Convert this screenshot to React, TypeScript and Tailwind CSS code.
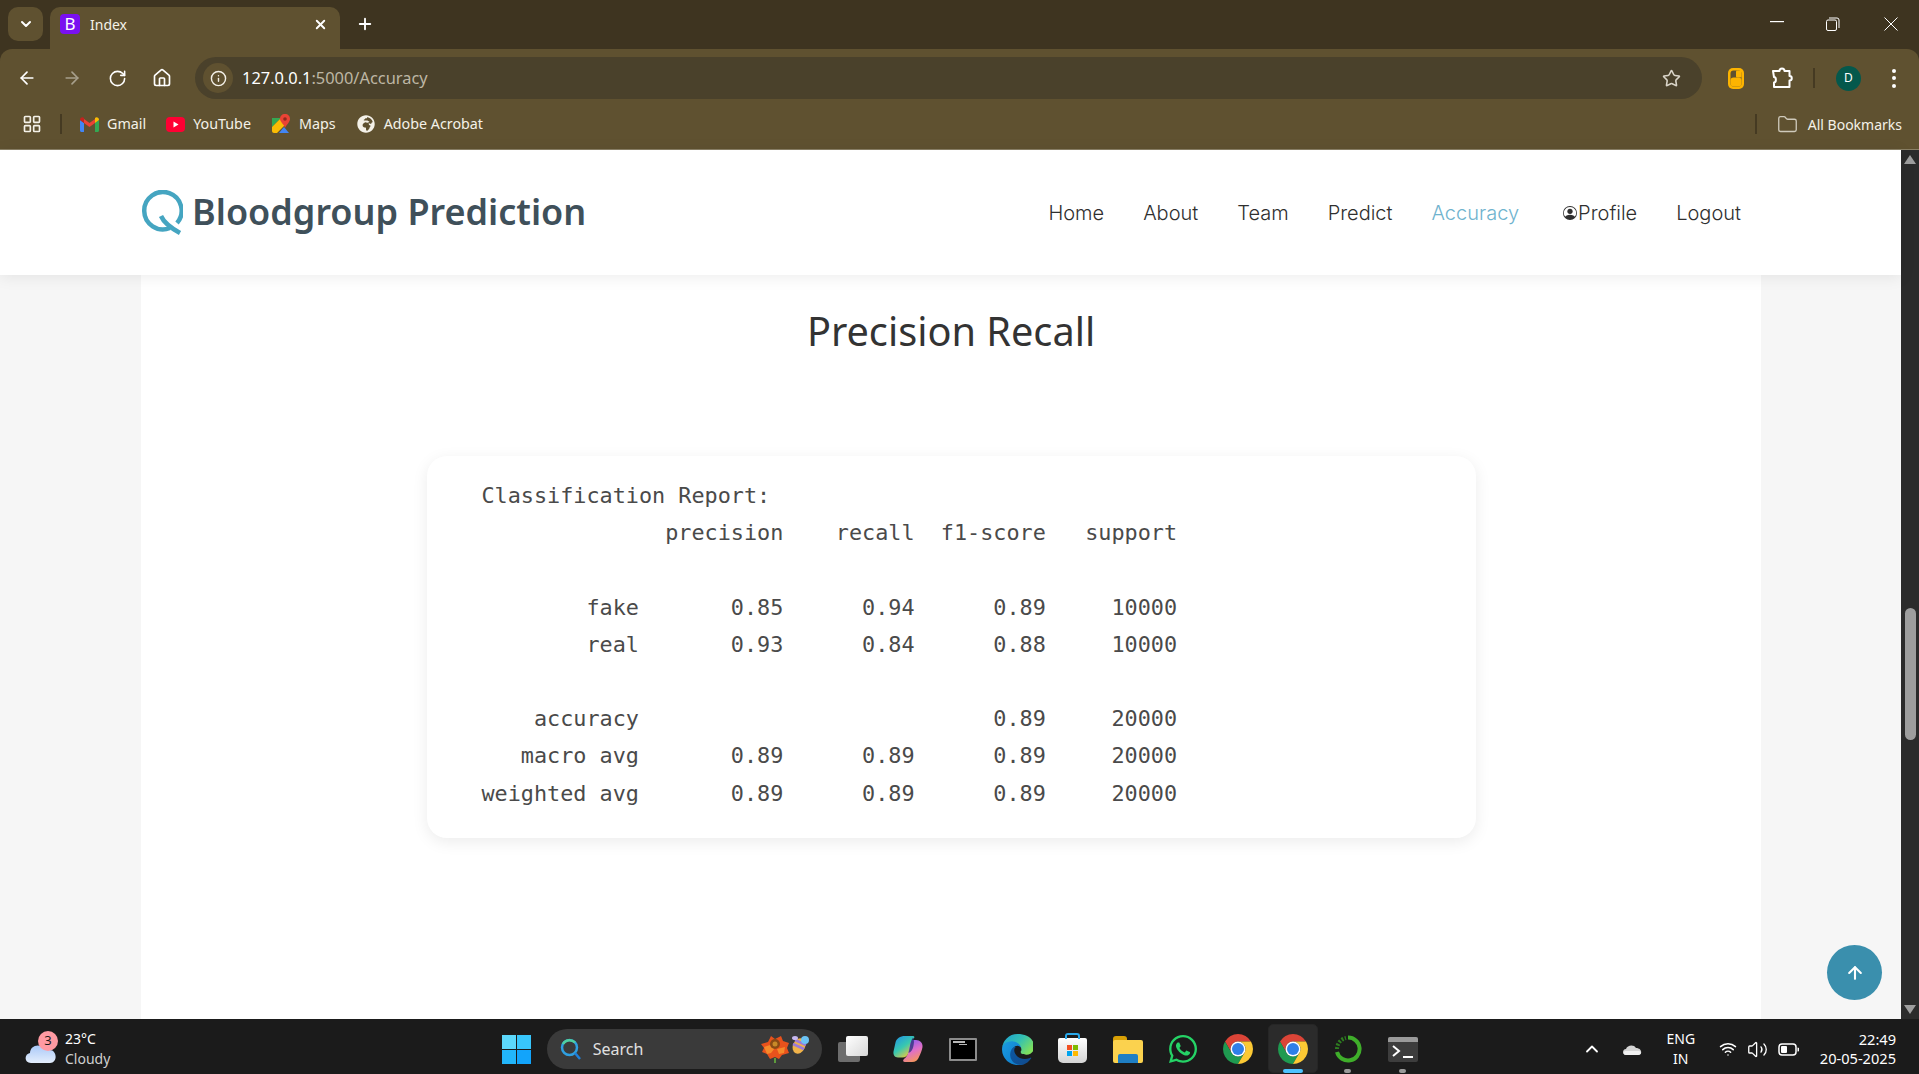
import { ArrowUp, ChevronDown, ChevronUp, Plus, X, ArrowLeft, ArrowRight, RotateCw, Home, Info, Star, Folder, LayoutGrid, Volume2, Wifi } from "lucide-react";
import { BsPersonCircle } from "react-icons/bs";
import { FaWhatsapp, FaGlobeAfrica } from "react-icons/fa";

const report = `Classification Report:
              precision    recall  f1-score   support

        fake       0.85      0.94      0.89     10000
        real       0.93      0.84      0.88     10000

    accuracy                           0.89     20000
   macro avg       0.89      0.89      0.89     20000
weighted avg       0.89      0.89      0.89     20000`;

function ChromeLogo() {
  return (
    <svg width="30" height="30" viewBox="4 4 40 40">
      <path fill="#db4437" d="M6.68 14A20 20 0 0 1 41.32 14H24A10 10 0 0 0 15.34 29Z" />
      <path fill="#1f9a50" d="M6.68 14L15.34 29A10 10 0 0 0 32.66 29L24 44A20 20 0 0 1 6.68 14Z" />
      <path fill="#fcc934" d="M41.32 14H24A10 10 0 0 1 32.66 29L24 44A20 20 0 0 0 41.32 14Z" />
      <circle cx="24" cy="24" r="10" fill="#fff" />
      <circle cx="24" cy="24" r="8" fill="#2f7fe8" />
    </svg>
  );
}

function EdgeLogo() {
  return (
    <svg width="31" height="31" viewBox="0 0 256 256">
      <defs>
        <linearGradient id="edgeBlue" x1="0" y1="0" x2="1" y2="1">
          <stop offset="0" stopColor="#0c59a4" />
          <stop offset="1" stopColor="#114a8b" />
        </linearGradient>
        <linearGradient id="edgeBody" x1="0" y1="0" x2="1" y2="1">
          <stop offset="0" stopColor="#1b9de2" />
          <stop offset="1" stopColor="#0d78c8" />
        </linearGradient>
        <linearGradient id="edgeTop" x1="0" y1="0" x2="1" y2="0.6">
          <stop offset="0" stopColor="#1aa0d8" />
          <stop offset="0.55" stopColor="#35c1b1" />
          <stop offset="1" stopColor="#7fe05c" />
        </linearGradient>
      </defs>
      <path fill="url(#edgeBlue)" d="M235.7 195.500a93.700 93.700 0 0 1-10.600 4.700 101.900 101.900 0 0 1-35.900 6.400c-47.300 0-88.500-32.500-88.500-74.300a31.500 31.500 0 0 1 16.400-27.300c-42.800 1.800-53.800 46.400-53.800 72.500 0 73.900 68.100 81.400 82.800 81.400 7.900 0 19.800-2.300 27-4.600l1.300-.4a128.300 128.300 0 0 0 66.600-52.800 4 4 0 0 0-5.300-5.700Z" />
      <path fill="url(#edgeBody)" d="M105.700 241.400a79.200 79.200 0 0 1-22.700-21.300 80.700 80.700 0 0 1 29.500-120c3.200-1.500 8.500-4.100 15.600-4a32.400 32.400 0 0 1 25.700 13 31.900 31.900 0 0 1 6.300 18.700c0-.2 24.500-79.600-80-79.600-43.900 0-80 41.700-80 78.200a130.200 130.200 0 0 0 12.100 56 128 128 0 0 0 156.400 67 75.500 75.500 0 0 1-63-8Z" />
      <path fill="url(#edgeTop)" d="M157.900 148.500c-.8 1-3.400 2.500-3.400 5.800 0 2.700 1.800 5.300 5 7.500 15 10.400 43.300 9 43.400 9a62.300 62.300 0 0 0 31.700-8.700 64.200 64.200 0 0 0 31.800-55.300c.3-23.400-8.300-39-11.800-45.900C232.700 17.200 184.800 0 128 0A128 128 0 0 0 0 126.200c.5-36.500 36.800-66 80-66 3.500 0 23.500.3 42 10.100a72.800 72.800 0 0 1 31 29.300c6.100 10.600 7.200 24.100 7.200 29.500s-2.700 13.300-7.800 19.900Z" />
    </svg>
  );
}

function CopilotLogo() {
  return (
    <svg width="30" height="28" viewBox="0 0 30 28">
      <defs>
        <linearGradient id="copA" x1="0" y1="0" x2="0.7" y2="1">
          <stop offset="0" stopColor="#1f8fe8" />
          <stop offset="0.55" stopColor="#38c8b0" />
          <stop offset="1" stopColor="#f5c838" />
        </linearGradient>
        <linearGradient id="copB" x1="0.3" y1="0" x2="0.7" y2="1">
          <stop offset="0" stopColor="#8a5cf0" />
          <stop offset="0.5" stopColor="#e070c8" />
          <stop offset="1" stopColor="#f89a50" />
        </linearGradient>
      </defs>
      <path fill="url(#copB)" d="M17 5h6c4 0 7 3 6.500 7-.5 3-2 7-3.500 10-1 3-3.500 5-7 5h-7c-2 0-2.500-1.500-1-3 3-2 4-5 4.500-9 .5-4 .5-10 2-10Z" />
      <path fill="url(#copA)" d="M12 1h8c1.500 0 2 1.500 .5 2.500-2 1.500-3 4-3.500 7l-1.500 7c-.7 3-3 5-6 5H5c-3.500 0-5-3-4.500-6l2-9C3.500 3.500 7 1 12 1Z" />
      <path fill="#27307a" d="M20 2.500c1.500 3 1 6 .3 9-.8 3-1.800 5.500-4.800 6.500l1.500-7c.5-3 1.300-6.500 3-8.500Z" opacity="0.75" />
    </svg>
  );
}

function Flower() {
  return (
    <svg width="30" height="28" viewBox="0 0 30 28">
      <path fill="#e8521c" d="M1 9l7-2 3-6 4 3 6-3 2 5 6 2-2 5 2 5-7 2-3 4-4-2-5 2-3-5-5-2 2-4Z" />
      <path fill="#f58a2a" d="M4 12l6-2 5 3-4 5-4 1Zm13 2l8-2-1 6-5 1Z" />
      <circle cx="15" cy="9" r="5" fill="#8a4a14" />
      <circle cx="15" cy="9" r="2.500" fill="#c88a28" />
      <rect x="14" y="23" width="2" height="5" fill="#5d9a3c" />
    </svg>
  );
}

function Bee() {
  return (
    <svg width="20" height="20" viewBox="0 0 20 20">
      <ellipse cx="9" cy="11" rx="6" ry="8" transform="rotate(25 9 11)" fill="#f0b34a" />
      <path d="M3 9l11 5M5 5l11 5" stroke="#9b7bd8" strokeWidth="2.500" />
      <circle cx="15" cy="5" r="4" fill="#6cc4f5" />
      <ellipse cx="5" cy="3" rx="3" ry="2" fill="#c7b8f0" />
    </svg>
  );
}

function TaskIcon({ children, active, dot }: { children: React.ReactNode; active?: boolean; dot?: boolean }) {
  return (
    <div className="relative flex h-[55px] w-[55px] items-center justify-center pt-[5px]">
      {active && <div className="absolute inset-x-[2.500px] top-[5px] bottom-[1px] rounded-[5px] border border-[#262626] bg-[#2b2b2b]" />}
      <div className="relative flex items-center justify-center">{children}</div>
      {active && <div className="absolute bottom-[1px] h-[4px] w-[20px] rounded-full bg-[#4cc2ff]" />}
      {dot && <div className="absolute bottom-[1px] h-[4px] w-[7px] rounded-full bg-[#9a9a9a]" />}
    </div>
  );
}

function Bookmark({ icon, label, gap }: { icon: React.ReactNode; label: string; gap: string }) {
  return (
    <div className={`flex items-center gap-[8px] ${gap}`}>
      <span className="flex w-[19px] justify-center">{icon}</span>
      <span className="text-[14.300px] text-[#f4f1e8]">{label}</span>
    </div>
  );
}

export default function App() {
  return (
    <div className="flex h-screen w-full flex-col overflow-hidden bg-white font-['Noto_Sans',sans-serif]">
      {/* tab strip */}
      <div className="flex h-[49px] shrink-0 bg-[#3e3420]">
        <div className="ml-[8px] mt-[7px] flex h-[34px] w-[35px] items-center justify-center rounded-[10px] bg-[#5f5130]">
          <ChevronDown size={16} strokeWidth={3} className="text-white" />
        </div>
        <div className="ml-[7px] mt-[7px] flex h-[42px] w-[290px] items-center rounded-t-[10px] bg-[#5f5130] pb-[8px] pl-[10px] pr-[12px]">
          <div className="flex h-[20px] w-[20px] items-center justify-center rounded-[4px] bg-[#7a10f0] text-[17px] text-white">B</div>
          <span className="ml-[10px] flex-1 text-[14px] text-[#f4f1e8]">Index</span>
          <X size={15} strokeWidth={3} className="text-white" />
        </div>
        <Plus size={18} strokeWidth={2.500} className="ml-[16px] mt-[15px] text-white" />
        <div className="ml-auto flex items-start text-white">
          <svg width="14" height="2" className="mr-[42px] mt-[21px]"><rect width="14" height="1.200" fill="#fff" /></svg>
          <svg width="14" height="14" viewBox="0 0 14 14" fill="none" stroke="#fff" className="mr-[44px] mt-[17px]">
            <rect x="0.5" y="3" width="10" height="10.500" rx="1.500" />
            <path d="M3 1h8a2 2 0 0 1 2 2v8" />
          </svg>
          <svg width="14" height="14" viewBox="0 0 14 14" stroke="#fff" className="mr-[21px] mt-[17px]">
            <path d="M.5.5l13 13M13.500.5l-13 13" />
          </svg>
        </div>
      </div>

      {/* toolbar */}
      <div className="shrink-0 bg-[#3e3420]">
        <div className="flex h-[58px] items-center rounded-t-[12px] bg-[#5f5130]">
          <div className="flex w-[195px] items-center pl-[17px] text-white">
            <ArrowLeft size={20} strokeWidth={2} />
            <ArrowRight size={20} strokeWidth={2} className="ml-[25px] text-[#a79f8b]" />
            <RotateCw size={19} strokeWidth={2} className="ml-[26px]" />
            <Home size={20} strokeWidth={2} className="ml-[25px]" />
          </div>
          <div className="flex h-[42px] w-[1507px] items-center rounded-full bg-[#4a412b] pl-[8px] pr-[21px]">
            <div className="flex h-[30px] w-[30px] items-center justify-center rounded-full bg-[#5f5130]">
              <Info size={17} className="text-[#f4f1e8]" />
            </div>
            <span className="ml-[9px] flex-1 text-[16.400px] text-white">
              127.0.0.1<span className="text-[#bdb6a4]">:5000/Accuracy</span>
            </span>
            <Star size={19} strokeWidth={2} className="text-[#d9d4c8]" />
          </div>
          <div className="flex flex-1 items-center pl-[26px]">
            <svg width="16" height="21" viewBox="0 0 16 21">
              <rect width="16" height="21" rx="5" fill="#fdb400" />
              <rect x="2.500" y="2.500" width="11" height="16" rx="3" fill="#5f5130" />
              <rect x="2.500" y="9.500" width="11" height="9" rx="3" fill="#fdb400" />
              <rect x="8" y="2.500" width="5.500" height="7" rx="1" fill="#fdb400" />
            </svg>
            <svg width="22" height="22" viewBox="0 0 22 22" fill="none" stroke="#fff" strokeWidth="2" strokeLinejoin="round" className="ml-[27px]">
              <path d="M2 4h6.500c0-3.500 5-3.500 5 0H18.500v5c3 0 3 4.500 0 4.500V20H3v-4.500c2.500 0 2.500-5.500 0-5.500Z" />
            </svg>
            <div className="ml-[20px] h-[20px] w-[2px] bg-[#453a22]" />
            <div className="ml-[21px] flex h-[25px] w-[25px] items-center justify-center rounded-full bg-[#04584c] text-[12px] text-white">D</div>
            <div className="ml-[31px] flex flex-col gap-[3.500px]">
              <span className="h-[4px] w-[4px] rounded-full bg-white" />
              <span className="h-[4px] w-[4px] rounded-full bg-white" />
              <span className="h-[4px] w-[4px] rounded-full bg-white" />
            </div>
          </div>
        </div>
      </div>

      {/* bookmarks */}
      <div className="flex h-[43px] shrink-0 items-center border-b border-[#8a8066] bg-[#5f5130] pb-[8px]">
        <LayoutGrid size={20} strokeWidth={2} className="ml-[22px] text-[#f4f1e8]" />
        <div className="ml-[18px] h-[20px] w-[2px] bg-[#453a22]" />
        <Bookmark
          gap="ml-[18px]"
          label="Gmail"
          icon={
            <svg width="19" height="15" viewBox="0 0 19 15">
              <path fill="#4285f4" d="M0 3v10.500C0 14.300.7 15 1.500 15H4V6Z" />
              <path fill="#34a853" d="M19 3v10.500c0 .8-.7 1.500-1.500 1.500H15V6Z" />
              <path fill="#ea4335" d="M4 6v-4L9.500 6 15 2v4L9.500 10Z" />
              <path fill="#c5221f" d="M0 3c0-2.500 2.500-3.500 4-2v5Z" />
              <path fill="#fbbc04" d="M19 3c0-2.500-2.500-3.500-4-2v5Z" />
            </svg>
          }
        />
        <Bookmark
          gap="ml-[20px]"
          label="YouTube"
          icon={
            <svg width="19" height="15" viewBox="0 0 19 15">
              <rect width="19" height="15" rx="4" fill="#ff0033" />
              <path d="M7.500 4.500l5 3-5 3Z" fill="#fff" />
            </svg>
          }
        />
        <Bookmark
          gap="ml-[21px]"
          label="Maps"
          icon={
            <svg width="18" height="20" viewBox="0 0 18 20">
              <path fill="#34a853" d="M0 4h9L0 13Z" />
              <path fill="#fbbc04" d="M0 13 9 4l5 6-9 9H2c-1 0-2-1-2-2Z" />
              <path fill="#4285f4" d="M7 19l5-6 5 6Z" />
              <path fill="#ea4335" d="M13 0c3 0 5 2 5 5 0 3-3 5-5 9-1-4-5-6-5-9 0-3 2-5 5-5Z" />
              <circle cx="13" cy="5" r="1.800" fill="#8e2a1f" />
            </svg>
          }
        />
        <Bookmark gap="ml-[21px]" label="Adobe Acrobat" icon={<FaGlobeAfrica size={18} className="text-[#f4f1e8]" />} />
        <div className="ml-auto h-[20px] w-[2px] bg-[#453a22]" />
        <Folder size={21} strokeWidth={1.500} className="ml-[20px] text-[#cfcabb]" />
        <span className="ml-[10px] mr-[17px] text-[14px] text-[#f4f1e8]">All Bookmarks</span>
      </div>

      {/* page */}
      <div className="flex min-h-0 flex-1">
        <div className="relative flex min-w-0 flex-1 flex-col bg-[#f6f6f6]">
          <header className="z-10 flex h-[125px] shrink-0 items-center bg-white pl-[141px] pr-[160px] shadow-[0_2px_15px_rgba(0,0,0,0.08)]">
            <svg width="42" height="45" viewBox="0 0 42 45" fill="none" stroke="#45a5c1" strokeWidth="4.500" className="mb-[1px]">
              <path d="M36 33A18.700 18.700 0 1 0 29 38" />
              <path d="M20 26c3 7 10 12 19 17" />
            </svg>
            <span className="mb-[2px] ml-[9px] font-['Noto_Sans',sans-serif] text-[36px] font-semibold leading-none text-[#3f505a]">Bloodgroup Prediction</span>
            <nav className="ml-auto flex items-center gap-[39px] font-['Inter',sans-serif] text-[20px] font-light text-[#2f2f2f]">
              <a>Home</a>
              <a>About</a>
              <a>Team</a>
              <a>Predict</a>
              <a className="text-[#6fb3ce]">Accuracy</a>
              <a className="ml-[5px] flex items-center">
                <BsPersonCircle size={14} className="mr-[1px]" />
                Profile
              </a>
              <a>Logout</a>
            </nav>
          </header>

          <main className="ml-[141px] flex min-h-0 w-[1620px] flex-1 flex-col items-center bg-white pt-[28px]">
            <h2 className="font-['Noto_Sans',sans-serif] text-[39.700px] font-normal leading-[56px] text-[#333333]">Precision Recall</h2>
            <div className="mt-[97px] w-[1049px] rounded-[20px] bg-white pb-[26px] pl-[55px] pt-[21px] shadow-[0_4px_16px_rgba(0,0,0,0.08)]">
              <pre className="font-['DejaVu_Sans_Mono',monospace] text-[21.800px] leading-[37.2px] text-[#4a4a4a]">{report}</pre>
            </div>
          </main>

          <button className="absolute bottom-[19px] right-[19px] flex h-[55px] w-[55px] items-center justify-center rounded-full bg-[#3a8fad] text-white">
            <ArrowUp size={20} strokeWidth={2.500} />
          </button>
        </div>

        {/* scrollbar */}
        <div className="relative w-[18px] shrink-0 bg-[#2b2b2b]">
          <div className="absolute left-[3px] top-[5px] h-0 w-0 border-x-[6px] border-b-[9px] border-x-transparent border-b-[#9e9e9e]" />
          <div className="absolute left-[4px] top-[458px] h-[132px] w-[11px] rounded-full bg-[#9e9e9e]" />
          <div className="absolute bottom-[5px] left-[3px] h-0 w-0 border-x-[6px] border-t-[9px] border-x-transparent border-t-[#9e9e9e]" />
        </div>
      </div>

      {/* taskbar */}
      <div className="grid h-[55px] shrink-0 grid-cols-[1fr_auto_1fr] bg-[#1b1b1b] text-white">
        <div className="flex items-center pl-[25px] pt-[5px]">
          <div className="relative h-[30px] w-[32px]">
            <svg width="32" height="24" viewBox="0 0 32 24" className="absolute bottom-[0px] left-0">
              <defs>
                <linearGradient id="cloud" x1="0" y1="0" x2="0" y2="1">
                  <stop offset="0" stopColor="#a9c8f8" />
                  <stop offset="1" stopColor="#e4eefc" />
                </linearGradient>
              </defs>
              <path fill="url(#cloud)" d="M6 23c-7 0-7-9-1-10 0-6 6-9 11-7 3-2 8 0 9 4 7 0 8 13 0 13Z" />
            </svg>
            <div className="absolute -top-[3px] left-[13px] flex h-[20px] w-[20px] items-center justify-center rounded-full bg-[#ff9aa2] text-[13px] text-[#1b1b1b]">3</div>
          </div>
          <div className="ml-[8px] flex flex-col text-[14px] leading-[20px]">
            <span>23°C</span>
            <span className="text-[#cfcfcf]">Cloudy</span>
          </div>
        </div>

        <div className="flex items-center">
          <TaskIcon>
            <div className="grid h-[29px] w-[29px] grid-cols-2 gap-[1px]">
              <span className="bg-[#5cd8fb]" />
              <span className="bg-[#38c6fb]" />
              <span className="bg-[#22b6fb]" />
              <span className="bg-[#12a4fb]" />
            </div>
          </TaskIcon>
          <div className="ml-[3px] mt-[5px] flex h-[40px] w-[275px] items-center rounded-full bg-[#3a3a3a] pl-[13px]">
            <svg width="22" height="22" viewBox="0 0 22 22" fill="none" strokeWidth="2.500">
              <circle cx="9.500" cy="9.500" r="7.500" stroke="#2f9fe0" />
              <path d="M3 6A7.500 7.500 0 0 1 15 4.500" stroke="#4fd0a0" />
              <path d="M15 15l5 6" stroke="#1e7fd8" />
            </svg>
            <span className="ml-[11px] text-[16px] text-[#e0e0e0]">Search</span>
            <div className="ml-auto mr-[12px] flex items-start">
              <Flower />
              <Bee />
            </div>
          </div>
          <div className="ml-[3.500px] flex">
            <TaskIcon>
              <div className="relative h-[26px] w-[30px]">
                <div className="absolute bottom-0 left-0 h-[20px] w-[22px] rounded-[2px] bg-[#6d6d6d]" />
                <div className="absolute right-0 top-0 h-[20px] w-[22px] rounded-[2px] bg-gradient-to-br from-white to-[#d8d8d8]" />
              </div>
            </TaskIcon>
            <TaskIcon>
              <CopilotLogo />
            </TaskIcon>
            <TaskIcon>
              <div className="flex h-[23px] w-[28px] flex-col gap-[1px] rounded-[1px] border-2 border-[#8c8c8c] bg-black pl-[2px] pt-[1px]">
                <span className="h-[2px] w-[12px] bg-[#b8b8b8]" />
                <span className="ml-[6px] h-[1px] w-[8px] bg-[#b8b8b8]" />
              </div>
            </TaskIcon>
            <TaskIcon>
              <EdgeLogo />
            </TaskIcon>
            <TaskIcon>
              <div className="relative mt-[2px] h-[25px] w-[29px] rounded-b-[5px] rounded-t-[2px] bg-gradient-to-b from-white to-[#d4d4d4]">
                <div className="absolute -top-[5px] left-[7px] h-[6px] w-[15px] rounded-t-[3px] border-x-2 border-t-2 border-[#28a8ea]" />
                <div className="absolute left-[9px] top-[7px] grid h-[11px] w-[11px] grid-cols-2 gap-[1px]">
                  <span className="bg-[#f25022]" />
                  <span className="bg-[#7fba00]" />
                  <span className="bg-[#00a4ef]" />
                  <span className="bg-[#ffb900]" />
                </div>
              </div>
            </TaskIcon>
            <TaskIcon>
              <div className="relative h-[27px] w-[30px]">
                <div className="absolute left-0 top-0 h-[12px] w-[14px] rounded-t-[3px] bg-[#d9a005]" />
                <div className="absolute bottom-0 left-0 top-[4px] w-[30px] rounded-[2px] bg-[#fbd24e]" />
                <div className="absolute bottom-0 left-[5px] h-[9px] w-[20px] rounded-t-[2px] bg-[#1f7fc4]" />
              </div>
            </TaskIcon>
            <TaskIcon>
              <FaWhatsapp size={32} className="text-[#25d366]" />
            </TaskIcon>
            <TaskIcon>
              <ChromeLogo />
            </TaskIcon>
            <TaskIcon active>
              <ChromeLogo />
            </TaskIcon>
            <TaskIcon dot>
              <svg width="28" height="28" viewBox="0 0 28 28" fill="none">
                <path d="M14 2.500A11.500 11.500 0 1 1 3 17" stroke="#3fae2a" strokeWidth="4" />
                <path d="M3 14A11.500 11.500 0 0 1 12 3" stroke="#2e7d20" strokeWidth="4" strokeDasharray="2 1.500" />
              </svg>
            </TaskIcon>
            <TaskIcon dot>
              <div className="relative h-[25px] w-[30px] rounded-[2px] bg-[#3d3d3d]">
                <div className="h-[5px] rounded-t-[2px] bg-[#9a9a9a]" />
                <svg width="22" height="16" viewBox="0 0 22 16" fill="none" stroke="#fff" strokeWidth="2" className="absolute left-[4px] top-[7px]">
                  <path d="M1 2l6 5-6 5M11 13h10" />
                </svg>
              </div>
            </TaskIcon>
          </div>
        </div>

        <div className="flex items-center justify-end pr-[23px] pt-[5px]">
          <ChevronUp size={20} strokeWidth={2.200} />
          <svg width="20" height="14" viewBox="0 0 20 14" className="ml-[20px]">
            <path fill="#d4d4d4" d="M4 13C0 13 0 7 4 7c1-4 8-5 10-1 6 0 7 7 2 7Z" />
            <path fill="#f0f0f0" d="M4 13c-3 0-3-3-1-4h14c3 1 2 4-1 4Z" />
          </svg>
          <div className="ml-[18px] flex w-[42px] flex-col items-center text-[14px] leading-[20px]">
            <span>ENG</span>
            <span>IN</span>
          </div>
          <Wifi size={18} strokeWidth={2} className="ml-[17px]" />
          <Volume2 size={21} strokeWidth={1.500} className="ml-[10px]" />
          <svg width="21" height="13" viewBox="0 0 21 13" className="ml-[10px]" fill="none">
            <rect x="1" y="1" width="17" height="11" rx="3" stroke="#fff" strokeWidth="1.500" />
            <rect x="3" y="3" width="6" height="7" rx="1" fill="#fff" />
            <path d="M19.500 4.500a2 2 0 0 1 0 4Z" fill="#fff" />
          </svg>
          <div className="ml-[21px] flex flex-col items-end text-[14.600px] leading-[19px]">
            <span>22:49</span>
            <span>20-05-2025</span>
          </div>
        </div>
      </div>
    </div>
  );
}
